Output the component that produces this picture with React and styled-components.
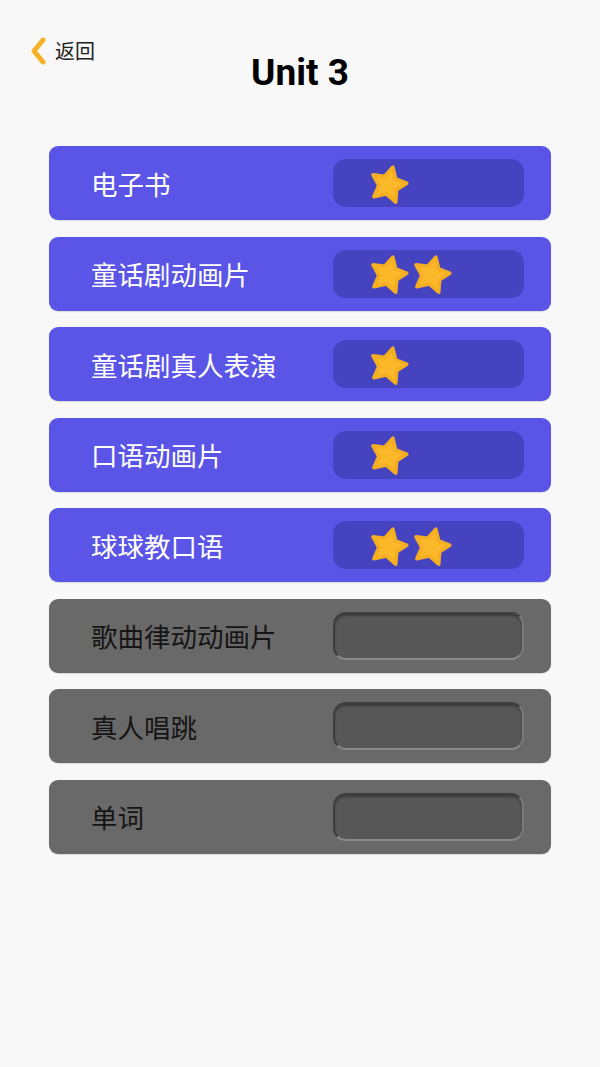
import React from "react";
import styled, { createGlobalStyle } from "styled-components";

const GlobalStyle = createGlobalStyle`
  html, body {
    margin: 0;
    padding: 0;
    background: #f8f8f8;
    font-family: "Noto Sans CJK SC", "Noto Sans", sans-serif;
  }
`;

const items = [
  { title: "电子书", stars: 1, open: true },
  { title: "童话剧动画片", stars: 2, open: true },
  { title: "童话剧真人表演", stars: 1, open: true },
  { title: "口语动画片", stars: 1, open: true },
  { title: "球球教口语", stars: 2, open: true },
  { title: "歌曲律动动画片", stars: 0, open: false },
  { title: "真人唱跳", stars: 0, open: false },
  { title: "单词", stars: 0, open: false },
];

const Star = () => (
  <svg width="43" height="43" viewBox="0 0 42 42">
    <polygon
      transform="rotate(14 21 22)"
      points="21,4.5 26.5,15 38,16.5 30,25 32,37 21,31.5 10,37 12,25 4,16.5 15.5,15"
      fill="#fbb829"
      stroke="#f4ae22"
      strokeWidth="3.5"
      strokeLinejoin="round"
    />
  </svg>
);

const App = () => {
  return (
    <Page>
      <GlobalStyle />
      <Header>
        <Back>
          <svg width="18" height="28" viewBox="0 0 18 28">
            <path
              d="M14 3 L5 14 L14 25"
              fill="none"
              stroke="#f6b226"
              strokeWidth="5"
              strokeLinecap="round"
              strokeLinejoin="round"
            />
          </svg>
          <span>返回</span>
        </Back>
        <Title>Unit 3</Title>
      </Header>
      <List>
        {items.map((item) => (
          <Card key={item.title} $open={item.open}>
            <Label $open={item.open}>{item.title}</Label>
            <Slot $open={item.open}>
              {Array.from({ length: item.stars }).map((_, i) => (
                <Star key={i} />
              ))}
            </Slot>
          </Card>
        ))}
      </List>
    </Page>
  );
};

export default App;

const Page = styled.div`
  width: 600px;
  min-height: 1067px;
  background: #f8f8f8;
`;

const Header = styled.div`
  position: relative;
  height: 146px;
  display: flex;
  justify-content: center;
`;

const Back = styled.div`
  position: absolute;
  left: 29px;
  top: 36px;
  display: flex;
  align-items: center;
  gap: 8px;
  font-size: 20px;
  color: #222;

  svg {
    display: block;
  }
`;

const Title = styled.h1`
  margin: 50px 0 0;
  font-family: Roboto, "Liberation Sans", sans-serif;
  font-weight: 700;
  font-size: 37px;
  line-height: 46px;
  color: #000;
`;

const List = styled.div`
  display: flex;
  flex-direction: column;
  gap: 16.5px;
  padding: 0 49px;
`;

const Card = styled.div`
  height: 74px;
  box-sizing: border-box;
  border-radius: 9px;
  display: flex;
  align-items: center;
  justify-content: space-between;
  padding: 0 27px 0 42px;
  background: ${(p) => (p.$open ? "#5a55e6" : "#696969")};
  box-shadow: 0 1px 1px rgba(0, 0, 0, 0.12);
`;

const Label = styled.span`
  font-size: 26.5px;
  color: ${(p) => (p.$open ? "#fff" : "#151515")};
`;

const Slot = styled.div`
  width: 191px;
  height: 48px;
  box-sizing: border-box;
  border-radius: 13px;
  display: flex;
  align-items: center;
  padding-left: 34px;
  gap: 0;
  background: ${(p) => (p.$open ? "#4643c1" : "#575757")};
  ${(p) =>
    !p.$open &&
    `
    border: 2px solid #3e3e3e;
    border-bottom-color: #8a8a8a;
    border-right-color: #7a7a7a;
    box-shadow: inset 0 2px 2px rgba(0,0,0,0.3);
  `}
`;
